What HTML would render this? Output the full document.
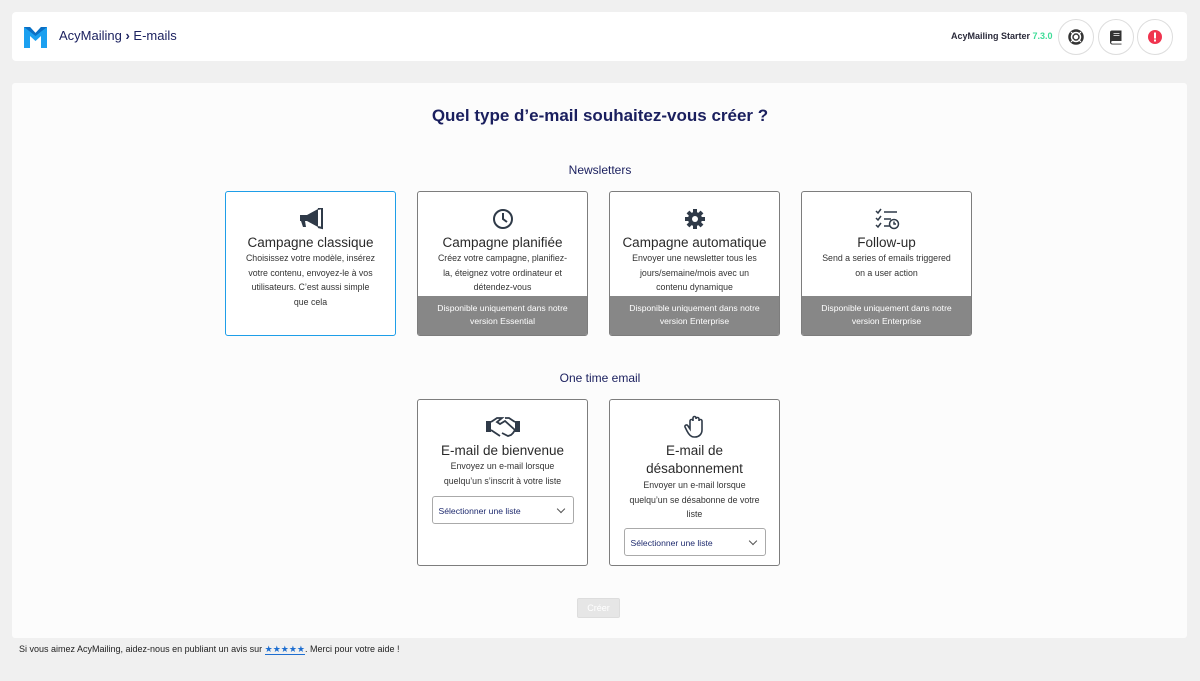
<!DOCTYPE html>
<html><head><meta charset="utf-8"><style>
*{box-sizing:border-box;margin:0;padding:0}
body{width:1200px;height:681px;background:#f0f0f0;font-family:"Liberation Sans",sans-serif;position:relative;overflow:hidden}
.hdr{position:absolute;left:12px;top:12px;width:1175px;height:49px;background:#fff;border-radius:4px}
.main{position:absolute;left:12px;top:83px;width:1175px;height:555px;background:#fcfcfc;border-radius:3px}
.abs{position:absolute}
.card{position:absolute;width:171px;border:1.5px solid #7d7d7d;border-radius:3px;background:#fff;text-align:center;color:#333;overflow:hidden}
.card.sel{border-color:#1e9ee8}
.card .t{font-size:13.5px;color:#2a2a2a;margin-top:2px;line-height:17px}
.card .d{font-size:8.8px;line-height:14.5px;color:#333;padding:0 19px}
.card .band{position:absolute;left:0;right:0;bottom:0;height:39px;background:#878787;color:#fff;font-size:8.6px;line-height:13px;padding-top:6px}
.ic{height:26px;margin-top:14px;display:flex;justify-content:center;align-items:center}
.selbox{margin:8px auto 0;width:142px;height:28px;border:1px solid #aaa;border-radius:3px;text-align:left;font-size:8.6px;color:#1e2a6e;padding:9px 6px;position:relative}
.selbox:after{content:"";position:absolute;right:9px;top:9px;width:5px;height:5px;border-right:1px solid #555;border-bottom:1px solid #555;transform:rotate(45deg)}
.rb{position:absolute;top:7px;width:36px;height:36px;border-radius:50%;border:1px solid #ddd;background:#fff;display:flex;align-items:center;justify-content:center}
</style></head><body>
<div class="hdr">
 <svg class="abs" style="left:11px;top:12px" width="25" height="25" viewBox="0 0 25 25"><path d="M1 3h6l5.5 6 5.5-6h6v21h-6V12l-5.5 5-5.5-5v12H1z" fill="#1ba0f0"/><path d="M1 3h6l5.5 6 5.5-6h6l-11.5 9z" fill="#0b6fc4"/></svg>
 <div class="abs" style="left:47px;top:16px;font-size:13px;color:#1c2260">AcyMailing <b style="font-size:13px">›</b> E-mails</div>
 <div class="abs" style="left:939px;top:19px;font-size:9px;font-weight:bold;color:#2a2a3a">AcyMailing Starter <span style="color:#3ddc97">7.3.0</span></div>
 <div class="rb" style="left:1046px"><svg width="18" height="18" viewBox="0 0 18 18"><circle cx="9" cy="9" r="6.5" fill="none" stroke="#333" stroke-width="2.5"/><circle cx="9" cy="9" r="3" fill="none" stroke="#333" stroke-width="1.5"/><g stroke="#fff" stroke-width="1.2"><path d="M4 4l2.5 2.5M14 4l-2.5 2.5M4 14l2.5-2.5M14 14l-2.5-2.5"/></g></svg></div>
 <div class="rb" style="left:1086px"><svg width="16" height="16" viewBox="0 0 16 16"><path d="M4 1.5h9.5v10.5H4.5a1.3 1.3 0 0 0 0 2.6h9V15.5H4.3A2.3 2.3 0 0 1 2 13.2V3.5a2 2 0 0 1 2-2z" fill="#333"/><path d="M5.5 4.5h6M5.5 6.5h6" stroke="#fff" stroke-width=".8"/></svg></div>
 <div class="rb" style="left:1125px"><svg width="16" height="16"><circle cx="8" cy="8" r="7" fill="#f0344f"/><rect x="7" y="3.5" width="2" height="6" fill="#fff"/><rect x="7" y="10.5" width="2" height="2" fill="#fff"/></svg></div>
</div>
<div class="main"></div>
<div class="abs" style="left:0;width:1200px;top:106px;text-align:center;font-size:17px;font-weight:bold;color:#1a1f5e">Quel type d’e-mail souhaitez-vous créer ?</div>
<div class="abs" style="left:0;width:1200px;top:163px;text-align:center;font-size:12px;color:#1a1f5e">Newsletters</div>
<div class="abs" style="left:0;width:1200px;top:371px;text-align:center;font-size:12px;color:#1a1f5e">One time email</div>

<div class="card sel" style="left:225px;top:191px;height:145px">
 <div class="ic"><svg width="26" height="22" viewBox="0 0 26 22"><path d="M2 7h7l11-6v18L9 13H7l1 6H5l-2-6H2z" fill="#2f3a48"/><path d="M20 1l4-1v20l-4-1" fill="none" stroke="#2f3a48" stroke-width="2"/></svg></div>
 <div class="t">Campagne classique</div>
 <div class="d">Choisissez votre modèle, insérez votre contenu, envoyez-le à vos utilisateurs. C’est aussi simple que cela</div>
</div>
<div class="card" style="left:417px;top:191px;height:145px">
 <div class="ic"><svg width="22" height="22"><circle cx="11" cy="11" r="9" fill="none" stroke="#2f3a48" stroke-width="2"/><path d="M11 5v6l4 3" fill="none" stroke="#2f3a48" stroke-width="2"/></svg></div>
 <div class="t">Campagne planifiée</div>
 <div class="d">Créez votre campagne, planifiez-la, éteignez votre ordinateur et détendez-vous</div>
 <div class="band">Disponible uniquement dans notre<br>version Essential</div>
</div>
<div class="card" style="left:609px;top:191px;height:145px">
 <div class="ic"><svg width="22" height="22" viewBox="0 0 22 22"><circle cx="11" cy="11" r="7" fill="#2f3a48"/><g stroke="#2f3a48" stroke-width="4"><path d="M11 1v20M1 11h20M4 4l14 14M18 4L4 18"/></g><circle cx="11" cy="11" r="3" fill="#fff"/></svg></div>
 <div class="t">Campagne automatique</div>
 <div class="d" style="padding:0 14px">Envoyer une newsletter tous les jours/semaine/mois avec un contenu dynamique</div>
 <div class="band">Disponible uniquement dans notre<br>version Enterprise</div>
</div>
<div class="card" style="left:801px;top:191px;height:145px">
 <div class="ic"><svg width="26" height="22" viewBox="0 0 26 22"><g stroke="#2f3a48" stroke-width="1.5" fill="none"><path d="M2 3l2 2 3-4M2 10l2 2 3-4M2 17l2 2 3-4M10 4h13M10 11h7M10 18h6"/><circle cx="20" cy="16" r="4.5"/><path d="M20 13.5v2.5h2"/></g></svg></div>
 <div class="t">Follow-up</div>
 <div class="d">Send a series of emails triggered on a user action</div>
 <div class="band">Disponible uniquement dans notre<br>version Enterprise</div>
</div>

<div class="card" style="left:417px;top:399px;height:167px">
 <div class="ic"><svg width="34" height="22" viewBox="0 0 34 22"><rect x="0" y="5" width="5" height="11" fill="#2f3a48"/><rect x="29" y="5" width="5" height="11" fill="#2f3a48"/><path d="M5 6l6-4h5l-5 4 3 2 5-3 10 9-2 3-2 2-3 1-6-3M5 14l3 2 6 4" fill="none" stroke="#2f3a48" stroke-width="1.8"/><path d="M29 6l-6-4h-4" fill="none" stroke="#2f3a48" stroke-width="1.8"/></svg></div>
 <div class="t">E-mail de bienvenue</div>
 <div class="d">Envoyez un e-mail lorsque quelqu’un s’inscrit à votre liste</div>
 <div class="selbox">Sélectionner une liste</div>
</div>
<div class="card" style="left:609px;top:399px;height:167px">
 <div class="ic"><svg width="22" height="24" viewBox="0 0 22 24"><path d="M6 14V6a1.5 1.5 0 0 1 3 0V3a1.5 1.5 0 0 1 3 0v1a1.5 1.5 0 0 1 3 0v2a1.5 1.5 0 0 1 3 0v9c0 4-3 7-7 7h-1c-3 0-5-2-7-6l-2-4a1.5 1.5 0 0 1 3-1z" fill="none" stroke="#2f3a48" stroke-width="1.6"/></svg></div>
 <div class="t" style="line-height:18px">E-mail de<br>désabonnement</div>
 <div class="d" style="padding:0 16px">Envoyer un e-mail lorsque quelqu’un se désabonne de votre liste</div>
 <div class="selbox" style="margin-top:6px">Sélectionner une liste</div>
</div>

<div class="abs" style="left:577px;top:598px;width:43px;height:20px;background:#e6e6e6;border:1px solid #ddd;border-radius:2px;color:#fff;font-size:9px;text-align:center;line-height:18px">Créer</div>
<div class="abs" style="left:19px;top:644px;font-size:9px;color:#222">Si vous aimez AcyMailing, aidez-nous en publiant un avis sur <span style="color:#1e6ed0;border-bottom:1px solid #1e6ed0">★★★★★</span>. Merci pour votre aide !</div>
</body></html>
